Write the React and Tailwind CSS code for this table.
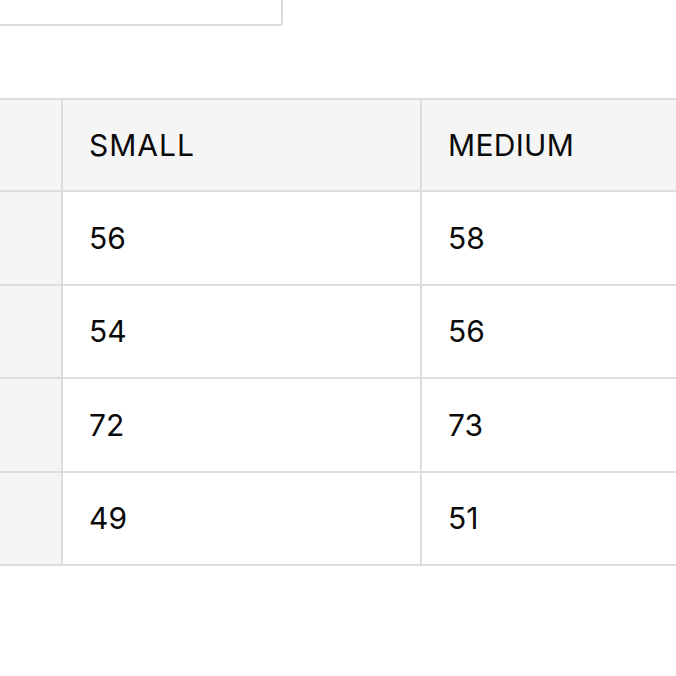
export default function App() {
  const rows = [
    ["56", "58", "h-[94px]"],
    ["54", "56", "h-[93px]"],
    ["72", "73", "h-[94px]"],
    ["49", "51", "h-[93px]"],
  ];
  const font = { fontFamily: "Inter, 'Liberation Sans', sans-serif" };
  return (
    <div className="w-[676px] h-[676px] overflow-hidden bg-white text-[#0a0a0a]" style={font}>
      <div className="-mt-[10px] -ml-[10px] w-[293px] h-[36px] border-2 border-[#dadada] rounded-[3px] bg-white" />
      <div className="mt-[72px] w-[900px] border-t-2 border-[#dddddd]">
        <div className="flex h-[92px] border-b-2 border-[#dddddd] bg-[#f5f5f5]">
          <div className="w-[63px] shrink-0 border-r-2 border-[#dddddd]" />
          <div className="w-[359px] shrink-0 border-r-2 border-[#dddddd] flex items-center pl-[26px] text-[30px] tracking-[1px]">
            SMALL
          </div>
          <div className="flex-1 flex items-center pl-[26px] text-[30px] tracking-[0.3px]">MEDIUM</div>
        </div>
        {rows.map(([a, b, h], i) => (
          <div key={i} className={`flex ${h} border-b-2 border-[#dddddd]`}>
            <div className="w-[63px] shrink-0 border-r-2 border-[#dddddd] bg-[#f5f5f5]" />
            <div className="w-[359px] shrink-0 border-r-2 border-[#dddddd] flex items-center pl-[26px] text-[30px]">
              {a}
            </div>
            <div className="flex-1 flex items-center pl-[26px] text-[30px]">{b}</div>
          </div>
        ))}
      </div>
    </div>
  );
}
